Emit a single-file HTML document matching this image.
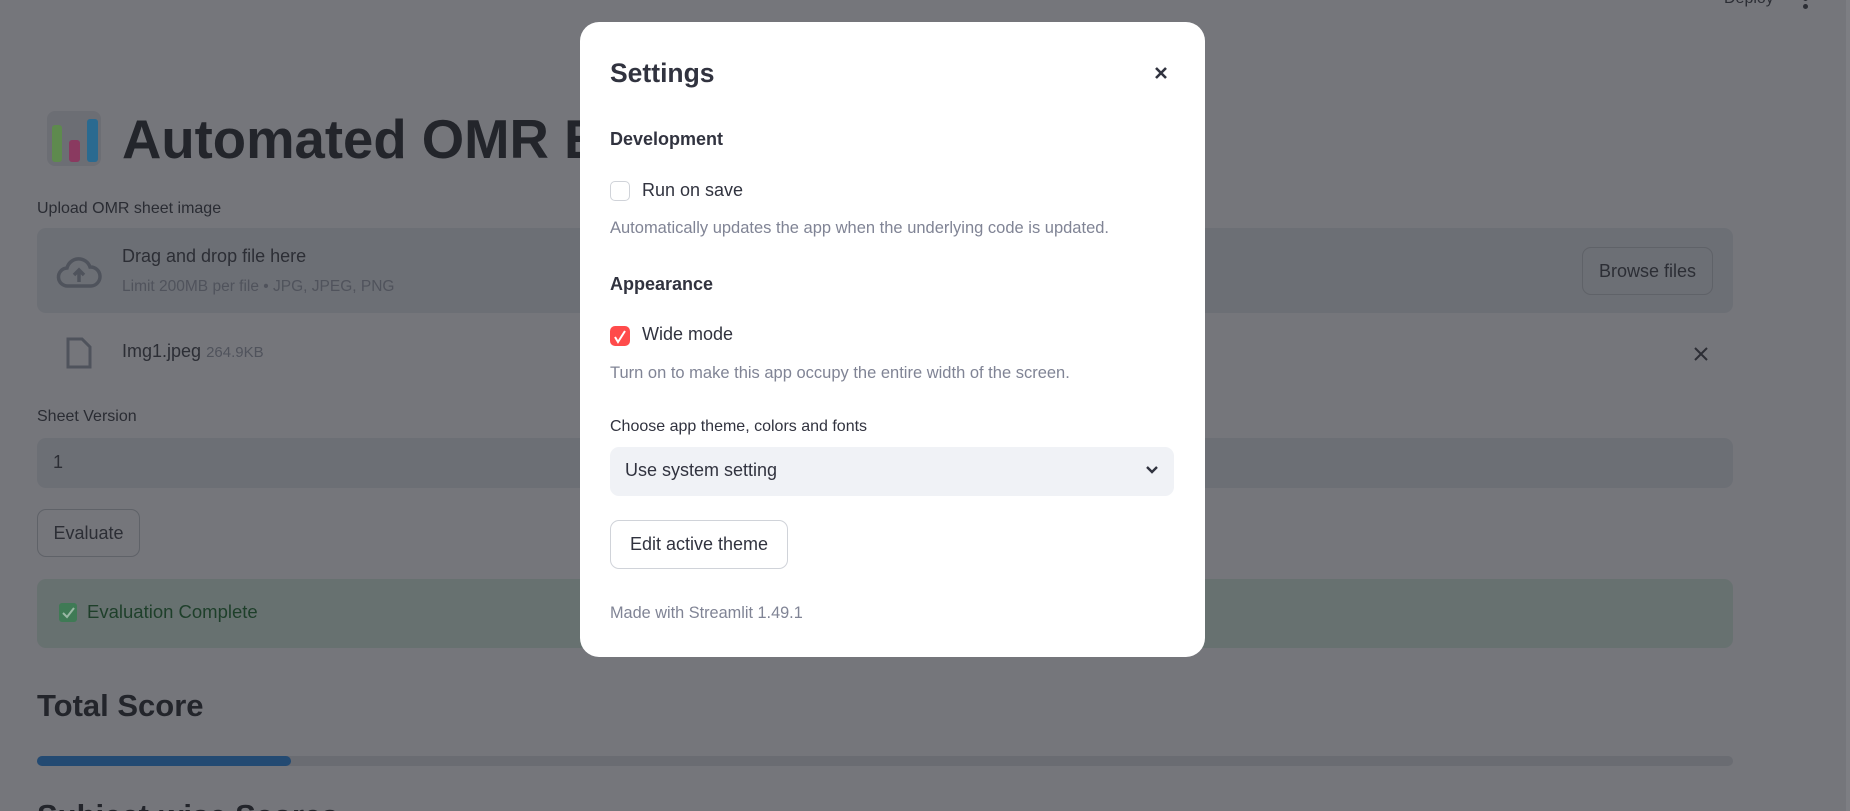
<!DOCTYPE html>
<html style="height:811px;overflow:hidden"><head><meta charset="utf-8"><style>
*{box-sizing:border-box;margin:0;padding:0}
body{width:1850px;height:811px;overflow:hidden;background:#75767b;font-family:"Liberation Sans",sans-serif;position:relative;color:#25272e}
.a{position:absolute;white-space:nowrap}
.m{position:absolute;left:580px;top:22px;width:625px;height:635px;background:#fff;border-radius:19px}
.m .a{color:#31333f}
.g{color:#808495!important}
</style></head><body>
<div class="a" style="left:1724px;top:-10px;font-size:16px;color:#2c2e35">Deploy</div>
<div class="a" style="left:1803px;top:-4px;width:5px;height:5px;border-radius:50%;background:#2c2e35"></div>
<div class="a" style="left:1803px;top:4px;width:5px;height:5px;border-radius:50%;background:#2c2e35"></div>
<div class="a" style="left:1846px;top:0;width:4px;height:811px;background:#7d7e83"></div>

<div class="a" style="left:47px;top:111px;width:54px;height:55px;border-radius:8px;background:#6c6e74">
 <div class="a" style="left:5px;top:14px;width:10px;height:37px;background:#5e8a4e;border-radius:3px"></div>
 <div class="a" style="left:22px;top:29px;width:11px;height:22px;background:#8a3a60;border-radius:3px"></div>
 <div class="a" style="left:40px;top:8px;width:11px;height:43px;background:#2a6a90;border-radius:3px"></div>
</div>
<div class="a" style="left:122px;top:108px;font-size:54.5px;font-weight:bold;color:#23252b">Automated OMR Ev</div>
<div class="a" style="left:37px;top:200px;font-size:16px;color:#2a2c33">Upload OMR sheet image</div>
<div class="a" style="left:37px;top:228px;width:1696px;height:85px;background:#6c6f75;border-radius:9px"></div>
<svg class="a" style="left:56px;top:252px" width="46" height="40" viewBox="0 0 46 40"><path d="M12 34a9 9 0 0 1-1-18 12 12 0 0 1 23-1 9 9 0 0 1 1 19z" fill="none" stroke="#4f535c" stroke-width="3.5"/><path d="M23 30v-11M18 23l5-5 5 5" stroke="#4f535c" stroke-width="3.5" fill="none"/></svg>
<div class="a" style="left:122px;top:246px;font-size:18px;color:#2c2e35">Drag and drop file here</div>
<div class="a" style="left:122px;top:278px;font-size:15.5px;color:#50535c">Limit 200MB per file • JPG, JPEG, PNG</div>
<div class="a" style="left:1582px;top:247px;width:131px;height:48px;border:1px solid #5f6268;border-radius:9px;font-size:18px;line-height:46px;text-align:center;color:#2c2e35">Browse files</div>
<svg class="a" style="left:66px;top:337px" width="26" height="32" viewBox="0 0 26 32"><path d="M2 2h14l8 8v20H2z" fill="none" stroke="#4f535c" stroke-width="3"/></svg>
<div class="a" style="left:122px;top:341px;font-size:18px;color:#2c2e35">Img1.jpeg <span style="font-size:15px;color:#50535c">264.9KB</span></div>
<svg class="a" style="left:1693px;top:346px" width="16" height="16" viewBox="0 0 16 16"><path d="M2 2l12 12M14 2L2 14" stroke="#2c2e35" stroke-width="2"/></svg>
<div class="a" style="left:37px;top:408px;font-size:16px;color:#2a2c33">Sheet Version</div>
<div class="a" style="left:37px;top:438px;width:1696px;height:50px;background:#6c6f75;border-radius:9px"></div>
<div class="a" style="left:53px;top:452px;font-size:18px;color:#2c2e35">1</div>
<div class="a" style="left:37px;top:509px;width:103px;height:48px;border:1px solid #5f6268;border-radius:9px;font-size:18px;line-height:46px;text-align:center;color:#2c2e35">Evaluate</div>
<div class="a" style="left:37px;top:579px;width:1696px;height:69px;background:#677170;border-radius:9px"></div>
<div class="a" style="left:59px;top:603px;width:18px;height:19px;background:#3f7a55;border-radius:3px"></div>
<svg class="a" style="left:59px;top:603px" width="18" height="19"><path d="M4 10l4 4 7-9" stroke="#9ab8a5" stroke-width="2" fill="none"/></svg>
<div class="a" style="left:87px;top:601px;font-size:18.5px;color:#1e3f2a">Evaluation Complete</div>
<div class="a" style="left:37px;top:688px;font-size:31px;font-weight:bold;color:#23252b">Total Score</div>
<div class="a" style="left:37px;top:756px;width:1696px;height:10px;background:#6a6c72;border-radius:5px"></div>
<div class="a" style="left:37px;top:756px;width:254px;height:10px;background:#234a72;border-radius:5px"></div>
<div class="a" style="left:37px;top:798px;height:13px;overflow:hidden"><div style="font-size:31px;font-weight:bold;color:#23252b;margin-top:0">Subject-wise Scores</div></div>

<div class="m">
 <div class="a" style="left:30px;top:36px;font-size:26.5px;font-weight:bold">Settings</div>
 <svg class="a" style="left:574px;top:44px" width="14" height="14"><path d="M2 2l10 10M12 2L2 12" stroke="#31333f" stroke-width="2.6"/></svg>
 <div class="a" style="left:30px;top:107px;font-size:18px;font-weight:bold">Development</div>
 <div class="a" style="left:30px;top:159px;width:20px;height:20px;border:1px solid #d0d3d9;border-radius:5px"></div>
 <div class="a" style="left:62px;top:158px;font-size:18px">Run on save</div>
 <div class="a g" style="left:30px;top:197px;font-size:16.5px">Automatically updates the app when the underlying code is updated.</div>
 <div class="a" style="left:30px;top:252px;font-size:18px;font-weight:bold">Appearance</div>
 <div class="a" style="left:30px;top:304px;width:20px;height:20px;background:#ff4b4b;border-radius:5px"></div>
 <svg class="a" style="left:30px;top:304px" width="20" height="20"><path d="M5 11l3 5 7-11" stroke="#fff" stroke-width="2" fill="none"/></svg>
 <div class="a" style="left:62px;top:302px;font-size:18px">Wide mode</div>
 <div class="a g" style="left:30px;top:342px;font-size:16.5px">Turn on to make this app occupy the entire width of the screen.</div>
 <div class="a" style="left:30px;top:396px;font-size:16px">Choose app theme, colors and fonts</div>
 <div class="a" style="left:30px;top:425px;width:564px;height:49px;background:#f0f2f6;border-radius:9px"></div>
 <div class="a" style="left:45px;top:438px;font-size:18px">Use system setting</div>
 <svg class="a" style="left:565px;top:443px" width="14" height="10"><path d="M2 2l5 5 5-5" stroke="#31333f" stroke-width="2.4" fill="none"/></svg>
 <div class="a" style="left:30px;top:498px;width:178px;height:49px;border:1px solid #d0d3d9;border-radius:9px;font-size:18px;line-height:47px;text-align:center">Edit active theme</div>
 <div class="a g" style="left:30px;top:582px;font-size:16.3px">Made with Streamlit 1.49.1</div>
</div>
</body></html>
